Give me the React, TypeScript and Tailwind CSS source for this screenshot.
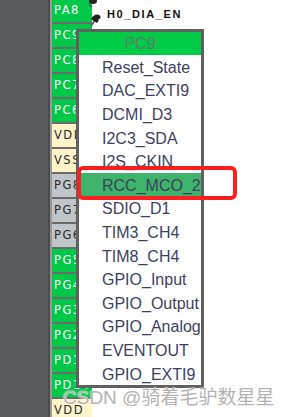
import React from "react";

type Pin = { name: string; kind: "g" | "y" | "s" };

const pins: Pin[] = [
  { name: "PA8", kind: "g" },
  { name: "PC9", kind: "g" },
  { name: "PC8", kind: "g" },
  { name: "PC7", kind: "g" },
  { name: "PC6", kind: "g" },
  { name: "VDD", kind: "y" },
  { name: "VSS", kind: "y" },
  { name: "PG8", kind: "s" },
  { name: "PG7", kind: "s" },
  { name: "PG6", kind: "s" },
  { name: "PG5", kind: "g" },
  { name: "PG4", kind: "g" },
  { name: "PG3", kind: "g" },
  { name: "PG2", kind: "g" },
  { name: "PD15", kind: "g" },
  { name: "PD14", kind: "g" },
  { name: "VDD", kind: "y" },
];

const items = [
  "Reset_State",
  "DAC_EXTI9",
  "DCMI_D3",
  "I2C3_SDA",
  "I2S_CKIN",
  "RCC_MCO_2",
  "SDIO_D1",
  "TIM3_CH4",
  "TIM8_CH4",
  "GPIO_Input",
  "GPIO_Output",
  "GPIO_Analog",
  "EVENTOUT",
  "GPIO_EXTI9",
];

function PinBox({ p }: { p: Pin }) {
  const cls =
    p.kind === "g"
      ? "bg-[#00c94a] text-white"
      : p.kind === "y"
      ? "bg-[#fff3c9] text-[#2a2a2a]"
      : "bg-[#bfc5c9] text-[#2a2a2a]";
  return (
    <div
      className={`h-[23px] shrink-0 flex items-center pl-[2px] overflow-hidden whitespace-nowrap text-[11.5px] tracking-[1.5px] ${cls}`}
      style={{ fontFamily: '"DejaVu Sans", sans-serif' }}
    >
      {p.name}
    </div>
  );
}

export default function App() {
  return (
    <div
      className="relative w-[291px] h-[417px] overflow-hidden bg-white flex"
      style={{ fontFamily: '"Liberation Sans", Arial, sans-serif' }}
    >
      <div className="w-[48px] shrink-0 bg-[#5b5e5f]" />
      <div className="w-[2px] shrink-0 bg-[#4a4c4d]" />
      <div className="w-[2px] shrink-0 bg-[#9a9a9a]" />
      <div className="w-[40px] shrink-0 flex flex-col gap-[2px] bg-[#6b6b6b] -mt-[1px]">
        {pins.map((p, i) => (
          <PinBox key={i} p={p} />
        ))}
      </div>
      <div className="flex-1 bg-white pt-[7px] pl-[15px]">
        <div className="text-[11px] font-bold tracking-[1.6px] text-[#111] leading-[14px]">
          H0_DIA_EN
        </div>
      </div>

      {/* pushpin icons */}
      <svg className="absolute left-[86px] top-[-2px]" width="16" height="32" viewBox="0 0 16 32">
        <ellipse cx="7" cy="3" rx="4" ry="3" fill="#222" />
        <path d="M3 6 L6 9" stroke="#555" strokeWidth="1.5" />
        <path d="M5 28 L9 22" stroke="#555" strokeWidth="1.5" />
        <path d="M7 18 L13 22 L11 25 L5 21 Z" fill="#1e1e1e" />
        <ellipse cx="11" cy="19" rx="3.5" ry="2.5" fill="#222" />
      </svg>

      {/* dropdown menu */}
      <div className="absolute left-[76px] top-[29px] w-[128px] border-[3px] border-[#606060] bg-white">
        <div className="h-[23px] bg-[#00cc48] flex items-center justify-center text-[16px] text-[#5c7e63] pt-[1px]">
          PC9
        </div>
        {items.map((it) => (
          <div
            key={it}
            className={`h-[23.6px] flex items-center pl-[23px] pt-[2px] text-[16px] text-[#3d3f5e] whitespace-nowrap ${
              it === "RCC_MCO_2" ? "bg-[#3db36c]" : ""
            }`}
          >
            {it}
          </div>
        ))}
      </div>

      {/* red highlight box */}
      <div className="absolute left-[77px] top-[166px] w-[160px] h-[34px] border-[4px] border-[#ff1e1e] rounded-[6px]" />

      {/* watermark */}
      <div
        className="absolute left-[63px] top-[385px] text-[19px] leading-[25px] text-[#b3b3b3] whitespace-nowrap"
        style={{
          fontFamily: '"Liberation Sans", "Noto Sans CJK SC", sans-serif',
          textShadow: "0 0 1px #fff, 0 0 2px #fff",
        }}
      >
        CSDN @骑着毛驴数星星
      </div>
    </div>
  );
}
